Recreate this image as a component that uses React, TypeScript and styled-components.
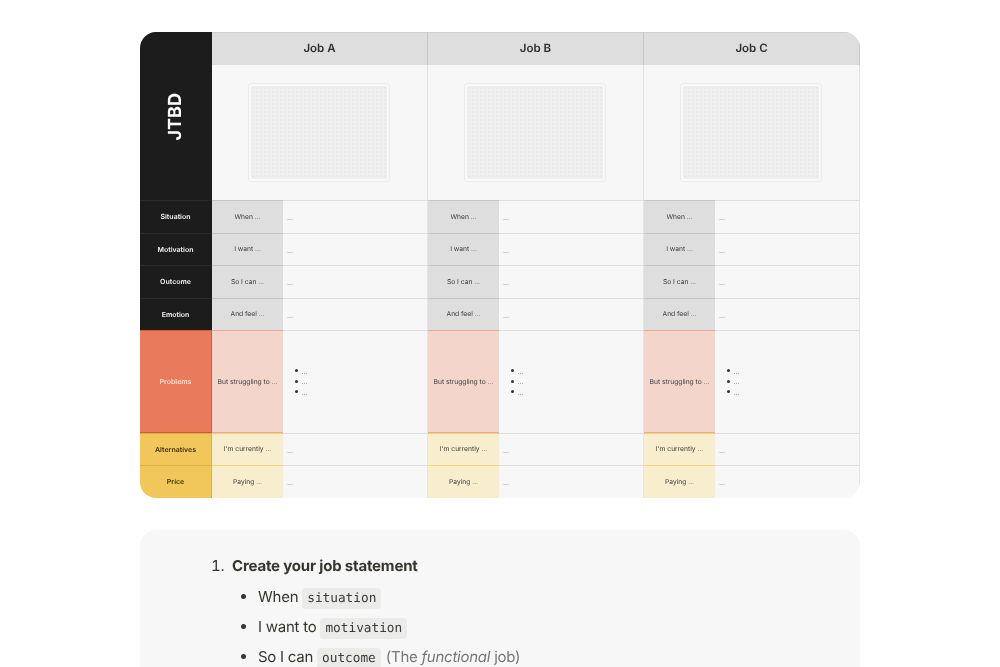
import React from "react";
import styled, { createGlobalStyle } from "styled-components";

const GlobalStyle = createGlobalStyle`
  html, body {
    margin: 0;
    padding: 0;
    height: 667px;
    overflow: hidden;
    background: #ffffff;
    font-family: Inter, "Liberation Sans", sans-serif;
    color: #37352f;
    text-rendering: geometricPrecision;
  }
`;

const Page = styled.div`
  width: 720px;
  margin: 0 auto;
  padding-top: 32px;
  display: flex;
  flex-direction: column;
  gap: 32px;
  will-change: transform;
`;

const Board = styled.div`
  display: grid;
  grid-template-columns: 72px repeat(3, 216px);
  grid-template-rows: 33px 135px 33px 32px 33px 32px 103px 32px 33px;
  border-radius: 16px;
  overflow: hidden;
`;

type Tone = "dark" | "red" | "yellow";

const sideBg: Record<Tone, string> = { dark: "#1c1c1c", red: "#e97a5c", yellow: "#f1c75b" };
const sideFg: Record<Tone, string> = { dark: "#f5f5f5", red: "#fbe3dc", yellow: "#3d2f08" };
const sideLine: Record<Tone, string> = { dark: "#2c2c2c", red: "#cf5a3c", yellow: "#ddb044" };
const labelBg: Record<Tone, string> = { dark: "#dedede", red: "#f3d5cc", yellow: "#f8edcd" };
const labelLine: Record<Tone, string> = { dark: "#c4c4c4", red: "#eca793", yellow: "#f0d578" };

const TitleCell = styled.div`
  grid-row: span 2;
  background: #1c1c1c;
  display: flex;
  align-items: center;
  justify-content: center;
  padding: 1px 2px 0 0;
`;

const Title = styled.span`
  writing-mode: vertical-rl;
  transform: rotate(180deg);
  color: #ffffff;
  font-size: 18px;
  font-weight: 700;
`;

const JobHead = styled.div`
  background: #dedede;
  border-right: 1px solid #c6c6c6;
  border-top: 1px solid #d2d2d2;
  box-sizing: border-box;
  padding-bottom: 2px;
  display: flex;
  align-items: center;
  justify-content: center;
  font-size: 11.5px;
  font-weight: 600;
  color: #2e2e2e;
`;

const Visual = styled.div`
  background: #f7f7f7;
  border-right: 1px solid #e2e2e2;
  box-sizing: border-box;
  display: flex;
  align-items: center;
  justify-content: center;
`;

const Frame = styled.div`
  width: 142px;
  height: 99px;
  margin-right: 1px;
  box-sizing: border-box;
  padding: 2px;
  background: #f9f9f9;
  border: 1px solid #ebebeb;
  border-radius: 4px;
`;

const Dots = styled.div`
  height: 100%;
  border-radius: 2px;
  background-color: #efefef;
  background-image: radial-gradient(#e8e8e8 0.7px, transparent 0.8px);
  background-size: 4px 4px;
`;

const SideCell = styled.div<{ $tone: Tone }>`
  background: ${(p) => sideBg[p.$tone]};
  color: ${(p) => sideFg[p.$tone]};
  border-top: 1px solid ${(p) => sideLine[p.$tone]};
  border-right: 1px solid ${(p) => (p.$tone === "dark" ? "#1c1c1c" : sideLine[p.$tone])};
  box-shadow: ${(p) => (p.$tone === "red" ? `inset 0 -1px 0 ${sideLine.red}` : "none")};
  box-sizing: border-box;
  padding-bottom: 1px;
  display: flex;
  align-items: center;
  justify-content: center;
  font-size: 7px;
  font-weight: 600;
`;

const Job = styled.div`
  display: grid;
  grid-template-columns: 71px 1fr;
  background: #f7f7f7;
  border-top: 1px solid #dedede;
  border-right: 1px solid #e4e4e4;
  box-sizing: border-box;
  min-width: 0;
`;

const Label = styled.div<{ $tone: Tone }>`
  background: ${(p) => labelBg[p.$tone]};
  box-shadow: 0 -1px 0 ${(p) => labelLine[p.$tone]}
    ${(p) => (p.$tone === "red" ? `, inset 0 -1px 0 ${labelLine.red}` : "")};
  color: #3a3a3a;
  padding-bottom: 1px;
  display: flex;
  align-items: center;
  justify-content: center;
  font-size: 6.7px;
  white-space: nowrap;
`;

const Value = styled.div`
  display: flex;
  align-items: center;
  padding-left: 4px;
  padding-top: 1px;
  font-size: 7px;
  color: #444444;
`;

const Bullets = styled.ul`
  list-style: none;
  margin: 0;
  padding: 0 0 0 8px;
  font-size: 7px;
  line-height: 10.5px;
  color: #444444;

  li::before {
    content: "";
    display: inline-block;
    width: 3px;
    height: 3px;
    border-radius: 50%;
    background: #333333;
    margin-right: 3.5px;
    vertical-align: 1.5px;
  }
`;

const Notes = styled.div`
  background: #f7f7f7;
  border-radius: 16px;
  padding: 24px 0 60px 71px;
  font-size: 15px;
  line-height: 24px;
  color: #37352f;
`;

const Steps = styled.ol`
  margin: 0;
  padding-left: 21px;
  letter-spacing: -0.18px;

  & > li::marker {
    content: "1.  ";
    white-space: pre;
  }
`;

const Sub = styled.ul`
  margin: 7px 0 0;
  padding-left: 26px;
  list-style-type: disc;
  letter-spacing: -0.25px;
  display: flex;
  flex-direction: column;
  gap: 6px;
`;

const Code = styled.code`
  font-family: "DejaVu Sans Mono", monospace;
  font-size: 12.75px;
  line-height: 1;
  letter-spacing: 0;
  background: #ebebea;
  border-radius: 4px;
  padding: 3px 5px;
  margin-right: 1px;
  color: #3b3b3b;
`;

const Muted = styled.span`
  color: #787774;
`;

const rows: { name: string; label: string; tone: Tone; list?: boolean }[] = [
  { name: "Situation", label: "When ...", tone: "dark" },
  { name: "Motivation", label: "I want ...", tone: "dark" },
  { name: "Outcome", label: "So I can ...", tone: "dark" },
  { name: "Emotion", label: "And feel ...", tone: "dark" },
  { name: "Problems", label: "But struggling to ...", tone: "red", list: true },
  { name: "Alternatives", label: "I'm currently ...", tone: "yellow" },
  { name: "Price", label: "Paying ...", tone: "yellow" },
];

const jobs = ["Job A", "Job B", "Job C"];

export default function App() {
  return (
    <>
      <GlobalStyle />
      <Page>
        <Board>
          <TitleCell>
            <Title>JTBD</Title>
          </TitleCell>
          {jobs.map((job) => (
            <JobHead key={job}>{job}</JobHead>
          ))}
          {jobs.map((job) => (
            <Visual key={job}>
              <Frame>
                <Dots />
              </Frame>
            </Visual>
          ))}
          {rows.map((row) => (
            <React.Fragment key={row.name}>
              <SideCell $tone={row.tone}>{row.name}</SideCell>
              {jobs.map((job) => (
                <Job key={job}>
                  <Label $tone={row.tone}>{row.label}</Label>
                  {row.list ? (
                    <Value>
                      <Bullets>
                        <li>...</li>
                        <li>...</li>
                        <li>...</li>
                      </Bullets>
                    </Value>
                  ) : (
                    <Value>...</Value>
                  )}
                </Job>
              ))}
            </React.Fragment>
          ))}
        </Board>
        <Notes>
          <Steps>
            <li>
              <strong>Create your job statement</strong>
              <Sub>
                <li>
                  When <Code>situation</Code>
                </li>
                <li>
                  I want to <Code>motivation</Code>
                </li>
                <li>
                  So I can <Code>outcome</Code>{" "}
                  <Muted>
                    (The <em>functional</em> job)
                  </Muted>
                </li>
              </Sub>
            </li>
          </Steps>
        </Notes>
      </Page>
    </>
  );
}
